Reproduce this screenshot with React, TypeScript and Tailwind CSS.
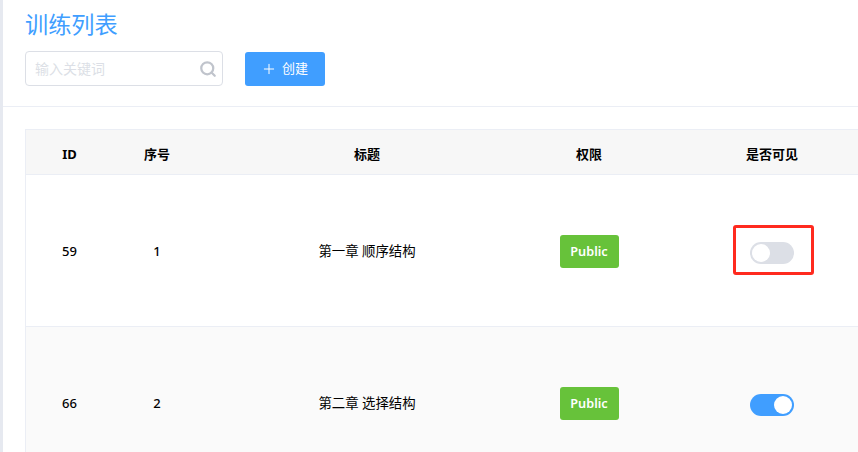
import { Plus, Search } from "lucide-react";

const FONT = "font-['Noto_Sans','Noto_Sans_CJK_SC',sans-serif]";
const COLS = "grid grid-cols-[87px_88px_332px_112px_254px]";

const rows = [
  { id: 59, order: 1, title: "第一章 顺序结构", visible: false },
  { id: 66, order: 2, title: "第二章 选择结构", visible: true },
];

const Toggle = ({ on }: { on: boolean }) => (
  <div
    className={`flex h-[22px] w-11 items-center rounded-full px-[2px] ${
      on ? "justify-end bg-[#409eff]" : "justify-start bg-[#dcdfe6]"
    }`}
  >
    <div className="size-[18px] rounded-full bg-white" />
  </div>
);

const App = () => {
  return (
    <div className={`${FONT} flex h-[452px] w-[858px] overflow-hidden bg-white`}>
      <div className="w-[3px] flex-none bg-[#e6e9f0]" />
      <div className="min-w-0 flex-1">
        <div className="h-[107px] border-b border-[#ebeef5] pl-[22px] pt-[7px]">
          <h1 className="h-[35px] text-[23.2px] leading-[35px] text-[#409eff]">训练列表</h1>
          <div className="mt-[9px] flex items-start">
            <div className="flex h-[35px] w-[198px] items-center justify-between rounded-[4px] border border-[#dcdfe6] pl-[9px] pr-[5px]">
              <span className="text-[14px] text-[#dcdfe6]">输入关键词</span>
              <Search size={18} strokeWidth={3} className="text-[#c0c4cc]" />
            </div>
            <button className="ml-[22px] mt-px flex h-[34px] w-20 items-center justify-center gap-[5px] rounded-[3px] bg-[#409eff] pr-px text-[13px] text-white">
              <Plus size={16} strokeWidth={1.5} />
              <span>创建</span>
            </button>
          </div>
        </div>

        <div className="ml-[22px] mt-[22px] w-[874px] border-l border-t border-[#ebeef5]">
          <div className={`${COLS} h-[45px] items-center border-b border-[#ebeef5] bg-[#f7f7f7] pt-[5px] text-center text-[13px] font-bold text-black`}>
            <div>ID</div>
            <div>序号</div>
            <div>标题</div>
            <div>权限</div>
            <div>是否可见</div>
          </div>
          {rows.map((row) => (
            <div
              key={row.id}
              className={`${COLS} h-[152px] items-center border-b border-[#ebeef5] pt-[2px] text-center text-[13.4px] text-black ${
                row.visible ? "bg-[#fafafa]" : "bg-white"
              }`}
            >
              <div className="text-[13px] font-medium">{row.id}</div>
              <div className="text-[13px] font-medium">{row.order}</div>
              <div>{row.title}</div>
              <div className="flex justify-center">
                <span className="flex h-[33px] w-[59px] items-center justify-center rounded-[3px] bg-[#67c23a] pt-px text-[12.7px] font-semibold text-white">
                  Public
                </span>
              </div>
              <div className="flex justify-center pt-[3px]">
                <div className="relative">
                  <Toggle on={row.visible} />
                  {!row.visible && (
                    <div className="absolute -left-[17px] -top-[17px] h-[50px] w-[81px] rounded-[3px] border-[3px] border-[#ff2a1f]" />
                  )}
                </div>
              </div>
            </div>
          ))}
        </div>
      </div>
    </div>
  );
};

export default App;
